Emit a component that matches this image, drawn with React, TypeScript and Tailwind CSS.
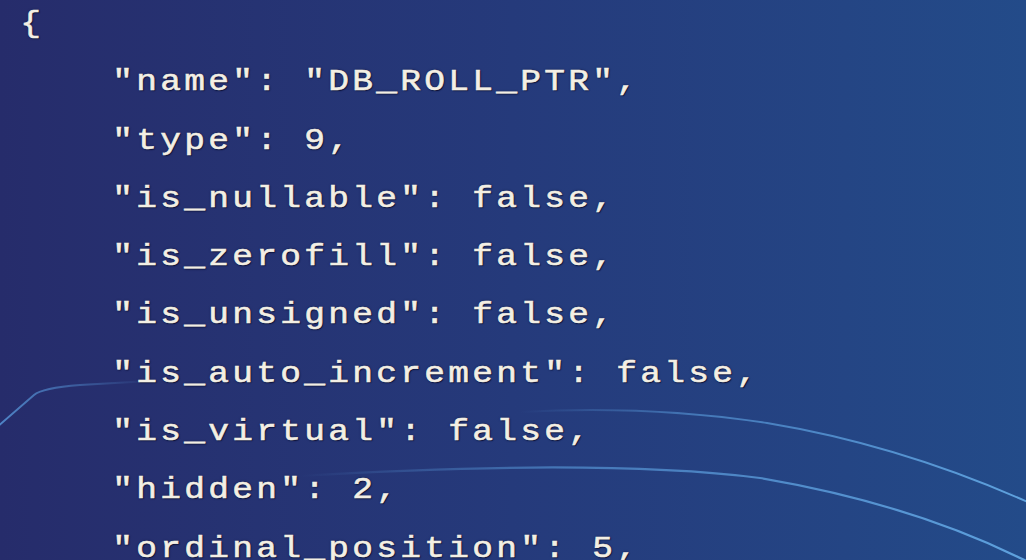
const lines = [
  { text: "{", indent: false },
  { text: '"name": "DB_ROLL_PTR",', indent: true },
  { text: '"type": 9,', indent: true },
  { text: '"is_nullable": false,', indent: true },
  { text: '"is_zerofill": false,', indent: true },
  { text: '"is_unsigned": false,', indent: true },
  { text: '"is_auto_increment": false,', indent: true },
  { text: '"is_virtual": false,', indent: true },
  { text: '"hidden": 2,', indent: true },
  { text: '"ordinal_position": 5,', indent: true },
];

const Swooshes = () => (
  <svg
    className="absolute inset-0 h-full w-full pointer-events-none"
    viewBox="0 0 1026 560"
    preserveAspectRatio="none"
  >
    <defs>
      <linearGradient id="fadeLeft" x1="0" y1="0" x2="1" y2="0">
        <stop offset="0" stopColor="#5fa6e6" stopOpacity="0" />
        <stop offset="0.35" stopColor="#5fa6e6" stopOpacity="0.55" />
        <stop offset="1" stopColor="#6ab2ee" stopOpacity="0.85" />
      </linearGradient>
      <linearGradient id="fadeRight" x1="0" y1="0" x2="1" y2="0">
        <stop offset="0" stopColor="#5a9de0" stopOpacity="0.8" />
        <stop offset="0.6" stopColor="#5a9de0" stopOpacity="0.35" />
        <stop offset="1" stopColor="#5a9de0" stopOpacity="0" />
      </linearGradient>
    </defs>
    {/* bottom-left stroke */}
    <path
      d="M -4 428 L 34 395 Q 42 388 80 385 L 150 381"
      fill="none"
      stroke="url(#fadeRight)"
      strokeWidth="2"
    />
    {/* upper arc */}
    <path
      d="M 520 412 Q 650 405 767 423 Q 900 445 1030 503"
      fill="none"
      stroke="url(#fadeLeft)"
      strokeWidth="2"
    />
    {/* lower arc */}
    <path
      d="M 300 476 Q 600 458 760 478 Q 920 505 1040 568"
      fill="none"
      stroke="url(#fadeLeft)"
      strokeWidth="2.2"
    />
  </svg>
);

export default function App() {
  return (
    <div className="relative h-[560px] w-[1026px] overflow-hidden bg-gradient-to-r from-[#262c6b] via-[#253a7b] to-[#234b89]">
      <Swooshes />
      <div className="relative -mt-[5px] origin-top-left scale-x-[1.15] font-['Liberation_Mono','Courier_New',monospace] text-[30px] leading-[58.3px] tracking-[2.87px] whitespace-pre text-[#f3efe4] [-webkit-text-stroke:0.6px_#f3efe4] [text-shadow:0_0_2px_#0b1035,1px_1px_1px_#0b1035]">
        {lines.map((line, i) => (
          <div key={i} className={line.indent ? "pl-[97.5px]" : "pl-[17.5px]"}>
            {line.text}
          </div>
        ))}
      </div>
    </div>
  );
}
